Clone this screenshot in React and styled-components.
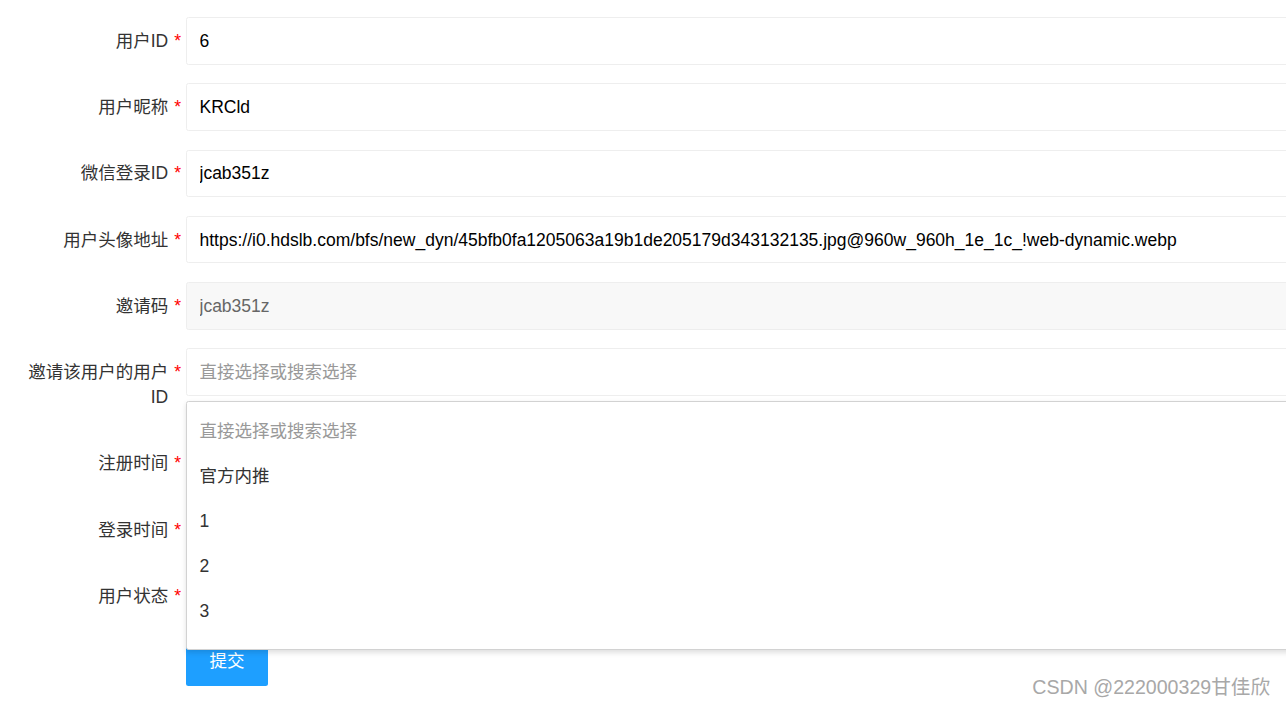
import styled, { createGlobalStyle } from "styled-components";

const GlobalStyle = createGlobalStyle`
  body {
    margin: 0;
    overflow: hidden;
    background: #fff;
    font-family: "Liberation Sans", Arial, "Noto Sans CJK SC", sans-serif;
  }
`;

const Page = styled.div`
  position: relative;
  width: 1286px;
  height: 706px;
  overflow: hidden;
`;

const Form = styled.form`
  padding-top: 17px;
`;

const Row = styled.div`
  position: relative;
  display: flex;
  align-items: flex-start;
  margin-bottom: 18.75px;
`;

const Label = styled.label`
  flex: none;
  width: 181px;
  margin-right: 5px;
  padding: 11.75px 0 10.75px;
  display: flex;
  justify-content: flex-end;
  align-items: flex-start;
  font-size: 17.5px;
  line-height: 25px;
  color: #333;
`;

const LabelText = styled.span`
  max-width: 146px;
  text-align: right;
`;

const Required = styled.span`
  margin-left: 6px;
  color: #f00;
`;

const Field = styled.div`
  position: relative;
  flex: none;
  width: 1150px;
`;

const Input = styled.input`
  display: block;
  box-sizing: border-box;
  width: 100%;
  height: 47.5px;
  padding: 1px 12.5px 0;
  border: 1px solid #eee;
  border-radius: 2.5px;
  outline: none;
  font-family: inherit;
  font-size: 17.5px;
  color: #000;
  background: ${(p) => (p.disabled ? "#f8f8f8" : "#fff")};

  &:disabled {
    color: #666;
  }

  &::placeholder {
    color: #999;
  }
`;

const Menu = styled.dl`
  position: absolute;
  top: 52.5px;
  left: 0;
  right: 0;
  z-index: 10;
  box-sizing: border-box;
  height: 249.5px;
  margin: 0;
  padding: 7.25px 0 5.25px;
  overflow: hidden;
  background: #fff;
  border: 1px solid #d2d2d2;
  border-radius: 2.5px;
  box-shadow: 0 2.5px 5px rgba(0, 0, 0, 0.12);
`;

const Option = styled.dd`
  margin: 0;
  padding: 0 12.5px;
  height: 45px;
  line-height: 45px;
  font-size: 17.5px;
  color: ${(p) => (p.$placeholder ? "#999" : "#333")};
  white-space: nowrap;
`;

const Submit = styled.button`
  margin-left: 186px;
  height: 47.5px;
  padding: 0 23.5px;
  border: none;
  border-radius: 2.5px;
  background: #1e9fff;
  color: #fff;
  font-family: inherit;
  font-size: 17.5px;
  line-height: 47.5px;
`;

const Watermark = styled.div`
  position: absolute;
  right: 16px;
  bottom: 6px;
  font-size: 19.6px;
  color: #a8a8a8;
  text-shadow: 0 0 1px #fff;
`;

const fields = [
  { label: "用户ID", value: "6" },
  { label: "用户昵称", value: "KRCld" },
  { label: "微信登录ID", value: "jcab351z" },
  {
    label: "用户头像地址",
    value:
      "https://i0.hdslb.com/bfs/new_dyn/45bfb0fa1205063a19b1de205179d343132135.jpg@960w_960h_1e_1c_!web-dynamic.webp",
  },
  { label: "邀请码", value: "jcab351z", disabled: true },
];

const options = ["官方内推", "1", "2", "3", "4"];

export default function App() {
  return (
    <Page>
      <GlobalStyle />
      <Form onSubmit={(e) => e.preventDefault()}>
        {fields.map((f) => (
          <Row key={f.label}>
            <Label>
              <LabelText>{f.label}</LabelText>
              <Required>*</Required>
            </Label>
            <Field>
              <Input defaultValue={f.value} disabled={f.disabled} />
            </Field>
          </Row>
        ))}

        <Row>
          <Label>
            <LabelText>邀请该用户的用户ID</LabelText>
            <Required>*</Required>
          </Label>
          <Field>
            <Input placeholder="直接选择或搜索选择" />
            <Menu>
              <Option $placeholder>直接选择或搜索选择</Option>
              {options.map((o) => (
                <Option key={o}>{o}</Option>
              ))}
            </Menu>
          </Field>
        </Row>

        {["注册时间", "登录时间", "用户状态"].map((l) => (
          <Row key={l}>
            <Label>
              <LabelText>{l}</LabelText>
              <Required>*</Required>
            </Label>
            <Field>
              <Input />
            </Field>
          </Row>
        ))}

        <Submit type="submit">提交</Submit>
      </Form>
      <Watermark>CSDN @222000329甘佳欣</Watermark>
    </Page>
  );
}
